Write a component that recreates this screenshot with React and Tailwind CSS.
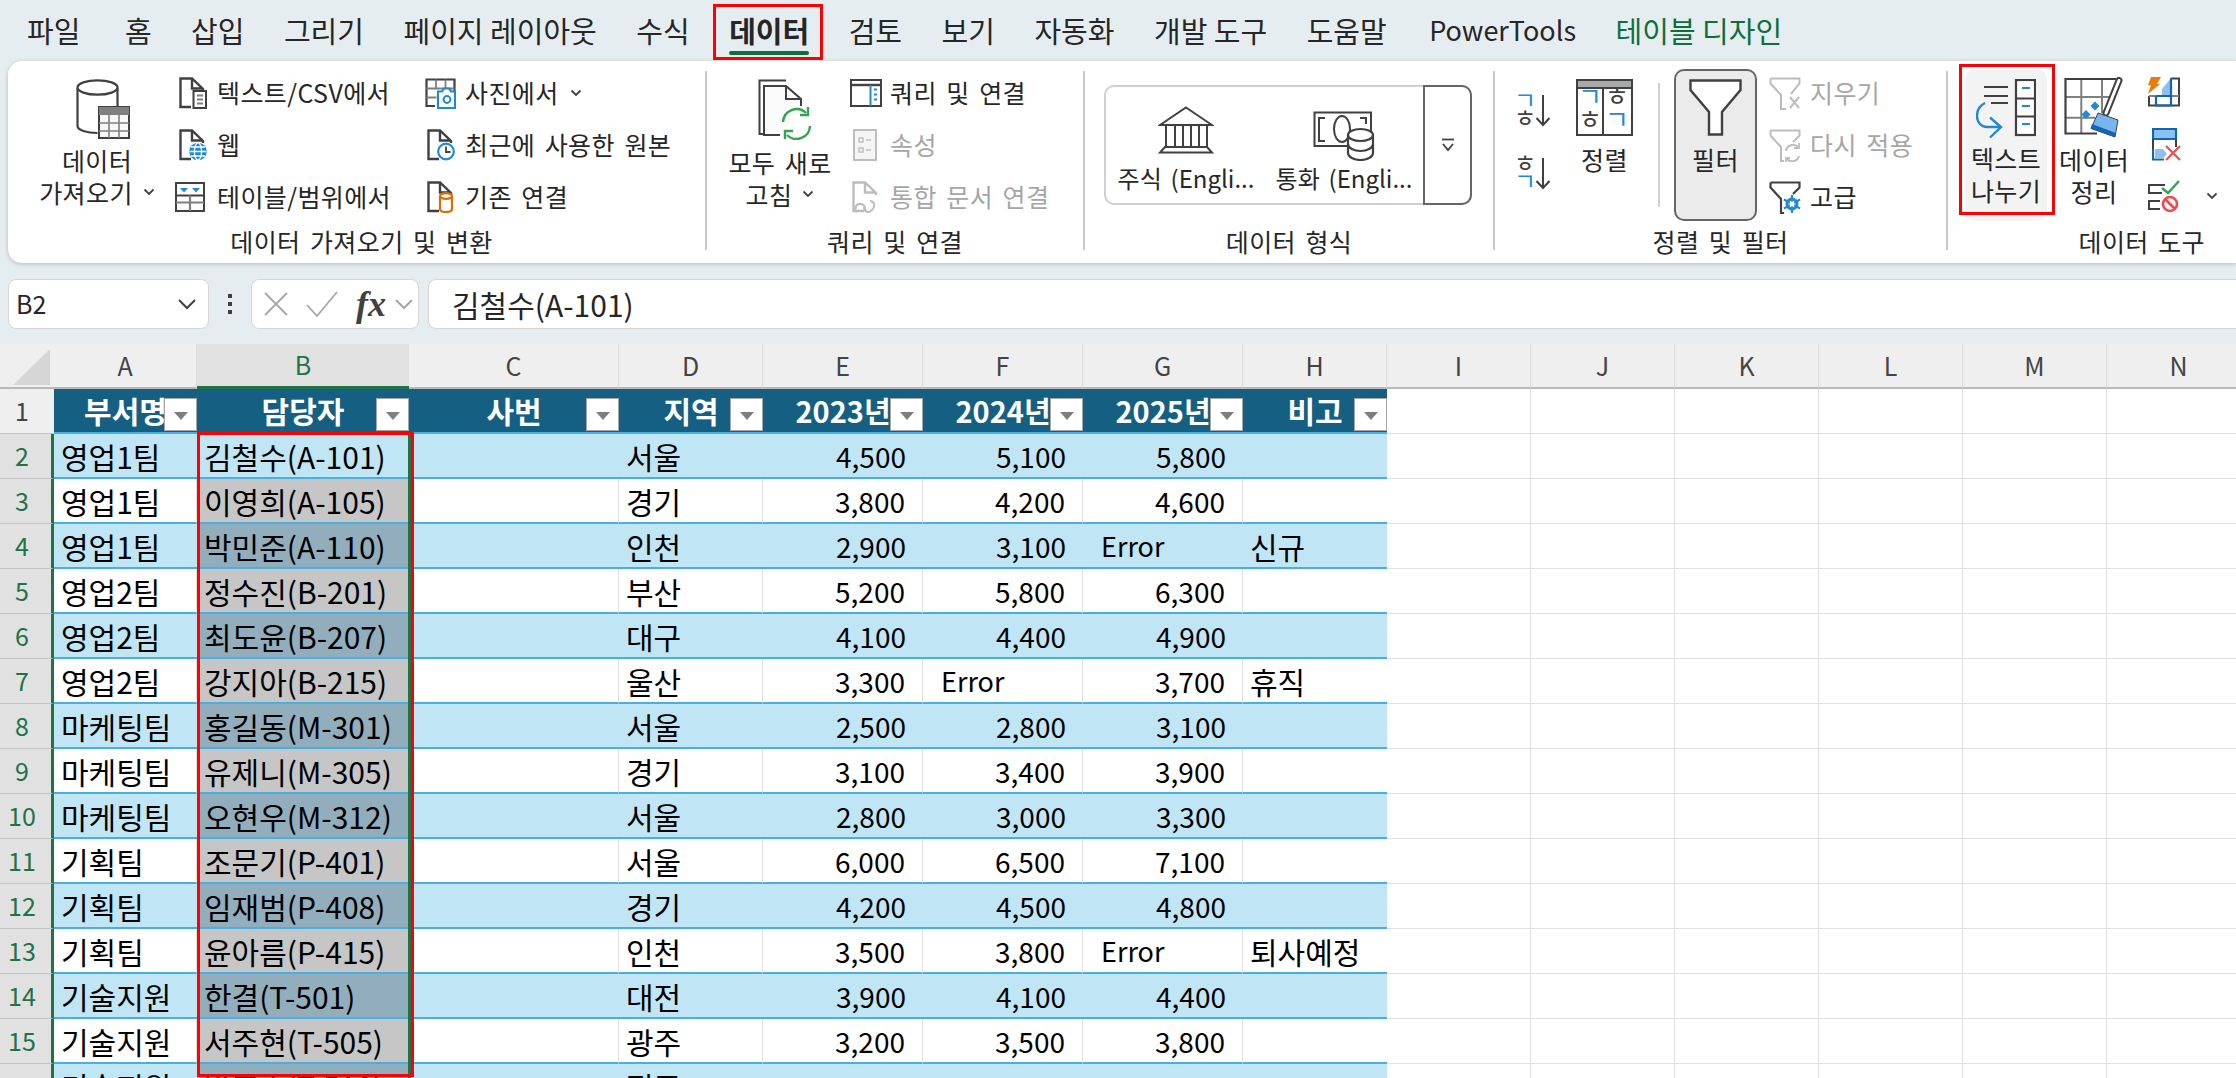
import React from 'react'

const DARK = '#404040'
const BLUE = '#1f8ad2'

const tabs = ['파일', '홈', '삽입', '그리기', '페이지 레이아웃', '수식', '데이터', '검토', '보기', '자동화', '개발 도구', '도움말', 'PowerTools', '테이블 디자인']

const rows = [
  ['영업1팀', '김철수(A-101)', '서울', '4,500', '5,100', '5,800', ''],
  ['영업1팀', '이영희(A-105)', '경기', '3,800', '4,200', '4,600', ''],
  ['영업1팀', '박민준(A-110)', '인천', '2,900', '3,100', 'Error', '신규'],
  ['영업2팀', '정수진(B-201)', '부산', '5,200', '5,800', '6,300', ''],
  ['영업2팀', '최도윤(B-207)', '대구', '4,100', '4,400', '4,900', ''],
  ['영업2팀', '강지아(B-215)', '울산', '3,300', 'Error', '3,700', '휴직'],
  ['마케팅팀', '홍길동(M-301)', '서울', '2,500', '2,800', '3,100', ''],
  ['마케팅팀', '유제니(M-305)', '경기', '3,100', '3,400', '3,900', ''],
  ['마케팅팀', '오현우(M-312)', '서울', '2,800', '3,000', '3,300', ''],
  ['기획팀', '조문기(P-401)', '서울', '6,000', '6,500', '7,100', ''],
  ['기획팀', '임재범(P-408)', '경기', '4,200', '4,500', '4,800', ''],
  ['기획팀', '윤아름(P-415)', '인천', '3,500', '3,800', 'Error', '퇴사예정'],
  ['기술지원', '한결(T-501)', '대전', '3,900', '4,100', '4,400', ''],
  ['기술지원', '서주현(T-505)', '광주', '3,200', '3,500', '3,800', ''],
  ['기술지원', '박준호(T-510)', '전주', '2,700', '3,000', '3,100', ''],
]

const GRID = 'grid grid-cols-[54px_143px_212px_210px_144px_160px_160px_160px_144px_144px_144px_144px_144px_144px_144px]'

function Chevron({ className = '', color = DARK }) {
  return (
    <svg width="12" height="8" viewBox="0 0 12 8" className={className}>
      <path d="M1.500 1.500 6 6l4.500-4.500" fill="none" stroke={color} strokeWidth="1.800" />
    </svg>
  )
}

function DocShape({ color = DARK }) {
  return <path d="M12 30H1.500V1.500H13L24 12V14M13 1.500V11.500H24" fill="none" stroke={color} strokeWidth="2.400" />
}

function DbTableIcon() {
  return (
    <svg width="54" height="60" viewBox="0 0 54 60">
      <path d="M1.500 9V47c0 4 9 7 20 7M41.500 9V27" fill="none" stroke={DARK} strokeWidth="2.200" />
      <ellipse cx="21.500" cy="8.500" rx="20" ry="7.200" fill="#fff" stroke={DARK} strokeWidth="2.200" />
      <rect x="23" y="28" width="30" height="31" fill="#f7f7f7" stroke={DARK} strokeWidth="2" />
      <rect x="23" y="28" width="30" height="8" fill="#808080" />
      <path d="M33 36V59M43 36V59M23 44H53M23 52H53" stroke="#808080" strokeWidth="1.600" />
    </svg>
  )
}

function TextDocIcon() {
  return (
    <svg width="28" height="32" viewBox="0 0 28 32">
      <DocShape />
      <rect x="14.500" y="14" width="12.500" height="17" fill="#fff" stroke={DARK} strokeWidth="2" />
      <path d="M18 18.500h6M18 22.500h6M18 26.500h6" stroke="#808080" strokeWidth="2" />
    </svg>
  )
}

function WebDocIcon() {
  return (
    <svg width="28" height="32" viewBox="0 0 28 32">
      <DocShape />
      <circle cx="19" cy="22.500" r="8.800" fill={BLUE} />
      <path d="M10.500 22.500h17M12 18h14M12 27h14" stroke="#fff" strokeWidth="1.300" />
      <ellipse cx="19" cy="22.500" rx="3.600" ry="8.600" fill="none" stroke="#fff" strokeWidth="1.300" />
    </svg>
  )
}

function TableRangeIcon() {
  return (
    <svg width="30" height="30" viewBox="0 0 30 30">
      <rect x="1" y="1" width="28" height="28" fill="#fff" stroke={DARK} strokeWidth="2" />
      <path d="M5 6h8l-4 4.500zM17 6h8l-4 4.500z" fill={BLUE} />
      <path d="M1 13.500h28" stroke={DARK} strokeWidth="2" />
      <path d="M1 20.500h28M15 13.500V29" stroke="#808080" strokeWidth="2.200" />
    </svg>
  )
}

function PhotoIcon() {
  return (
    <svg width="31" height="31" viewBox="0 0 31 31">
      <path d="M10 28H1.500V1.500h28V14" fill="none" stroke={DARK} strokeWidth="2.200" />
      <path d="M1.500 10.500h28M1.500 19.500h10M11 1.500v10M20.500 1.500v10" stroke="#808080" strokeWidth="1.800" />
      <path d="M13 13.500h4l2-3h5l2 3h4V30H13z" fill="#fff" stroke={BLUE} strokeWidth="2.200" />
      <circle cx="22" cy="21.500" r="3.400" fill="none" stroke={BLUE} strokeWidth="2" />
    </svg>
  )
}

function ClockDocIcon() {
  return (
    <svg width="28" height="32" viewBox="0 0 28 32">
      <DocShape />
      <circle cx="19" cy="22.500" r="7.800" fill="#fff" stroke={BLUE} strokeWidth="2.200" />
      <path d="M19 17.500v5.500h4.500" fill="none" stroke={DARK} strokeWidth="1.800" />
    </svg>
  )
}

function DbDocIcon() {
  return (
    <svg width="28" height="32" viewBox="0 0 28 32">
      <DocShape />
      <path d="M13 15v13c0 2 3 3 6 3s6-1 6-3V15" fill="#fff" stroke="#dd6b00" strokeWidth="2.200" />
      <ellipse cx="19" cy="15" rx="6" ry="2.800" fill="#fff" stroke="#dd6b00" strokeWidth="2.200" />
    </svg>
  )
}

function RefreshIcon() {
  return (
    <svg width="54" height="61" viewBox="0 0 54 61">
      <path d="M28 1.500H1.500V55H6" fill="none" stroke={DARK} strokeWidth="2" />
      <path d="M22 56H6V7H28L43 20V27M28 7V20H43" fill="#fafafa" stroke={DARK} strokeWidth="2" />
      <path d="M25 43a13.500 13.500 0 0 1 23-9" fill="none" stroke="#33a351" strokeWidth="2.400" />
      <path d="M50 28v8h-8" fill="none" stroke="#33a351" strokeWidth="2.400" />
      <path d="M52 47a13.500 13.500 0 0 1-23 9" fill="none" stroke="#33a351" strokeWidth="2.400" />
      <path d="M27 60v-8h8" fill="none" stroke="#33a351" strokeWidth="2.400" />
    </svg>
  )
}

function QueryPanelIcon() {
  return (
    <svg width="32" height="28" viewBox="0 0 32 28">
      <rect x="1" y="1" width="30" height="26" fill="#fff" stroke={DARK} strokeWidth="2" />
      <path d="M1 6h30" stroke={DARK} strokeWidth="2.400" />
      <path d="M20.500 6v21" stroke={BLUE} strokeWidth="2" />
      <path d="M24 10.500h3M24 15.500h3M24 20.500h3" stroke={BLUE} strokeWidth="2" />
    </svg>
  )
}

function PropertiesIcon() {
  return (
    <svg width="24" height="32" viewBox="0 0 24 32">
      <rect x="1" y="1" width="22" height="30" fill="#f5f5f5" stroke="#bdbdbd" strokeWidth="2" />
      <rect x="6" y="9" width="4" height="4" fill="none" stroke="#bdbdbd" strokeWidth="1.400" />
      <rect x="6" y="19" width="4" height="4" fill="none" stroke="#bdbdbd" strokeWidth="1.400" />
      <path d="M13 11h5M13 21h5" stroke="#bdbdbd" strokeWidth="1.600" />
    </svg>
  )
}

function LinkDocIcon() {
  return (
    <svg width="28" height="32" viewBox="0 0 28 32">
      <DocShape color="#bdbdbd" />
      <path d="M5 31c-3-3-1-9 4-8s5 7 2 7M18 20c4 0 6 5 2 9s-8 1-8-3" fill="none" stroke="#bdbdbd" strokeWidth="2" />
    </svg>
  )
}

function BankIcon() {
  return (
    <svg width="56" height="48" viewBox="0 0 56 48">
      <path d="M28 1.500 54 19H2z" fill="#fff" stroke={DARK} strokeWidth="2" />
      <path d="M8 19V41M17 19V41M25 19V41M33 19V41M41 19V41M49 19V41" stroke={DARK} strokeWidth="2" />
      <path d="M7 41H49L54 46.500H2z" fill="#fff" stroke={DARK} strokeWidth="2" />
    </svg>
  )
}

function MoneyIcon() {
  return (
    <svg width="62" height="50" viewBox="0 0 62 50">
      <path d="M36 35H1.500V1.500H58V22" fill="none" stroke={DARK} strokeWidth="2" />
      <path d="M12 7H6v23h6M47 7h6v6" fill="none" stroke={DARK} strokeWidth="2" />
      <ellipse cx="29" cy="18" rx="8" ry="13" fill="none" stroke={DARK} strokeWidth="2" />
      <path d="M35 24v18c0 4 6 7 12.500 7S60 46 60 42V24" fill="#fff" stroke={DARK} strokeWidth="2.200" />
      <ellipse cx="47.500" cy="24" rx="12.500" ry="6" fill="#fff" stroke={DARK} strokeWidth="2.200" />
      <path d="M35 33c0 4 6 7 12.500 7S60 37 60 33" fill="none" stroke={DARK} strokeWidth="2.200" />
    </svg>
  )
}

function SortUpIcon({ first, second, firstColor, secondColor }) {
  return (
    <svg width="33" height="33" viewBox="0 0 33 33" overflow="visible" fontFamily="'Noto Sans CJK KR', sans-serif" fontSize="24">
      <text x="-5" y="15" fill={firstColor}>{first}</text>
      <text x="-5" y="33" fill={secondColor}>{second}</text>
      <path d="M24 1v30M17.500 24l6.500 7 6.500-7" fill="none" stroke={DARK} strokeWidth="2" />
    </svg>
  )
}

function SortIcon() {
  return (
    <svg width="57" height="57" viewBox="0 0 57 57" overflow="visible" fontFamily="'Noto Sans CJK KR', sans-serif" fontSize="26">
      <rect x="1" y="1" width="55" height="55" fill="#fff" stroke={DARK} strokeWidth="2" />
      <rect x="1" y="1" width="55" height="8" fill="#a8a8a8" stroke={DARK} strokeWidth="2" />
      <path d="M27 9v47" stroke={DARK} strokeWidth="2" />
      <text x="2" y="27" fill={BLUE}>ㄱ</text>
      <text x="2" y="50" fill={DARK}>ㅎ</text>
      <text x="29" y="27" fill={DARK}>ㅎ</text>
      <text x="29" y="50" fill={BLUE}>ㄱ</text>
    </svg>
  )
}

function FunnelBig() {
  return (
    <svg width="53" height="57" viewBox="0 0 53 57">
      <path d="M1.500 1.500h50V11L33 33v22.500H20V33L1.500 11z" fill="#fff" stroke={DARK} strokeWidth="2.400" />
    </svg>
  )
}

function FunnelClear() {
  return (
    <svg width="33" height="33" viewBox="0 0 33 33">
      <path d="M1.500 1.500h29v5L22 17M1.500 1.500v5L12 18v14h5" fill="none" stroke="#bdbdbd" strokeWidth="2" />
      <path d="M21 20l9 11M30 20l-9 11" stroke="#bdbdbd" strokeWidth="2" />
    </svg>
  )
}

function FunnelReapply() {
  return (
    <svg width="33" height="33" viewBox="0 0 33 33">
      <path d="M1.500 1.500h29v5L24 13M1.500 1.500v5L12 18v14h3" fill="none" stroke="#bdbdbd" strokeWidth="2" />
      <path d="M17 22a7 7 0 0 1 12-4M30 27a7 7 0 0 1-12 3" fill="none" stroke="#bdbdbd" strokeWidth="2" />
      <path d="M30 14v5h-5M17 33v-4h4" fill="none" stroke="#bdbdbd" strokeWidth="1.800" />
    </svg>
  )
}

function FunnelAdvanced() {
  return (
    <svg width="33" height="33" viewBox="0 0 33 33">
      <path d="M1.500 1.500h29v5L24 13M1.500 1.500v5L12 18v14h3" fill="none" stroke={DARK} strokeWidth="2.200" />
      <circle cx="23" cy="23" r="5" fill="none" stroke={BLUE} strokeWidth="3" />
      <path d="M23 14v18M15 18.500l16 9M31 18.500l-16 9" stroke={BLUE} strokeWidth="2.200" />
      <circle cx="23" cy="23" r="2.500" fill="#fff" />
    </svg>
  )
}

function TextSplitIcon() {
  return (
    <svg width="60" height="60" viewBox="0 0 60 60">
      <path d="M8 8h24M8 17h24M15 24h17" stroke={DARK} strokeWidth="2.200" />
      <rect x="40" y="1" width="19" height="55" fill="#fff" stroke={DARK} strokeWidth="2.200" />
      <path d="M40 19.500h19M40 37.500h19" stroke={DARK} strokeWidth="2.200" />
      <path d="M46 9h8M46 27h8M46 45h8" stroke={BLUE} strokeWidth="2.200" />
      <path d="M9 24C3 27 1 32 1 37c0 6 4 11 10 11h14" fill="none" stroke={BLUE} strokeWidth="2.400" />
      <path d="M14 38.500 25 48 14 58.500" fill="none" stroke={BLUE} strokeWidth="2.400" />
    </svg>
  )
}

function DataCleanIcon() {
  return (
    <svg width="61" height="61" viewBox="0 0 61 61">
      <path d="M17.300 2v55M38 2v34M1 20h49M1 40.700h30" stroke="#7f7f7f" strokeWidth="2" />
      <path d="M52 2H1.500V56.500H33" fill="none" stroke={DARK} strokeWidth="2.200" />
      <path d="M55 3.500 42 36" stroke={DARK} strokeWidth="7" strokeLinecap="round" />
      <path d="M55 3.500 42 36" stroke="#fff" strokeWidth="3" strokeLinecap="round" />
      <path d="M34 36l20 7-3 17-24-8.500z" fill="#77b5ec" stroke={DARK} strokeWidth="1" />
      <path d="M27 51.500 51 60l.8-4L28 47z" fill="#1464b4" />
      <path d="M31 24.500l4.500 4.500-4.500 4.500-4.500-4.500zM22 33l4.500 4.500L22 42l-4.500-4.500z" fill={BLUE} />
    </svg>
  )
}

function FlashFillIcon() {
  return (
    <svg width="32" height="30" viewBox="0 0 32 30">
      <path d="M14 12 23 1V19H14z" fill="#8cc0f0" />
      <path d="M23 1.500H31V28.500H1V19" fill="none" stroke={DARK} strokeWidth="2" />
      <path d="M1 19H31" stroke="#7f7f7f" strokeWidth="2" />
      <path d="M8 19V28.500H23V1M8 19H23" fill="none" stroke="#1464b4" strokeWidth="2.200" />
      <path d="M3 0H13L9 7H12L0 17 3 8H0z" fill="#e87d0d" />
    </svg>
  )
}

function DuplicatesIcon() {
  return (
    <svg width="29" height="33" viewBox="0 0 29 33">
      <rect x="1" y="1" width="23" height="10" fill="#8cc0f0" />
      <path d="M1 11V1H24V11ZM1 21V31.500H12" fill="none" stroke="#1464b4" strokeWidth="2.200" />
      <path d="M1 11V21M24 11V19" stroke={DARK} strokeWidth="2" />
      <path d="M3 21H11L15 26 11 30.500H3z" fill="#8cc0f0" />
      <path d="M14 18l14 14M28 18 14 32" stroke="#f0504a" strokeWidth="2.200" />
    </svg>
  )
}

function ValidationIcon() {
  return (
    <svg width="32" height="33" viewBox="0 0 32 33">
      <path d="M17 5H1V13H14M12 21H1V29H12" fill="none" stroke={DARK} strokeWidth="2" />
      <path d="M14 8l6 5L31 1" fill="none" stroke="#33a351" strokeWidth="2.400" />
      <circle cx="22" cy="24" r="7" fill="#fff" stroke="#ef4b4b" strokeWidth="2.600" />
      <path d="M17 19l10 10" stroke="#ef4b4b" strokeWidth="2.600" />
    </svg>
  )
}

function SmallItem({ icon, label, chevron, disabled, slot = 'w-[42px]' }) {
  return (
    <div className="flex h-[52px] items-center">
      <div className={`${slot} flex shrink-0 items-center`}>{icon}</div>
      <span className={`whitespace-nowrap ${disabled ? 'text-[#a6a6a6]' : 'text-[#262626]'}`}>{label}</span>
      {chevron && <Chevron className="ml-[11px]" />}
    </div>
  )
}

function Group({ width, label, labelClass = 'text-center', children, last }) {
  return (
    <div className={`${width} ${last ? '' : 'border-r-2 border-[#c9c9c9]'} h-[179px] shrink-0`}>
      <div className="flex h-[156px]">{children}</div>
      <div className={`h-[28px] whitespace-nowrap leading-[28px] text-[#262626] ${labelClass}`}>{label}</div>
    </div>
  )
}

function Ribbon() {
  return (
    <div className="ml-[8px] flex h-[202px] rounded-l-[14px] bg-white pt-[10px] text-[25px] tracking-[0.4px] [word-spacing:3.5px] shadow-[0_1px_4px_rgba(0,0,0,0.22)]">
      <Group width="w-[699px]" label="데이터 가져오기 및 변환" labelClass="text-center pl-[10px]">
        <div className="ml-[14px] flex w-[150px] flex-col items-center pt-[8px] leading-[32px] text-[#262626]">
          <div className="ml-[11px] h-[60px]"><DbTableIcon /></div>
          <div className="mt-[5px]">데이터</div>
          <div className="flex items-center">가져오기<Chevron className="ml-[10px]" /></div>
        </div>
        <div className="-mt-[4px] ml-[3px] w-[248px]">
          <SmallItem icon={<TextDocIcon />} label="텍스트/CSV에서" slot="w-[42px] pl-[4px]" />
          <SmallItem icon={<WebDocIcon />} label="웹" slot="w-[42px] pl-[4px]" />
          <SmallItem icon={<TableRangeIcon />} label="테이블/범위에서" />
        </div>
        <div className="-mt-[4px]">
          <SmallItem icon={<PhotoIcon />} label="사진에서" chevron slot="w-[42px] pl-[2px]" />
          <SmallItem icon={<ClockDocIcon />} label="최근에 사용한 원본" slot="w-[42px] pl-[4px]" />
          <SmallItem icon={<DbDocIcon />} label="기존 연결" slot="w-[42px] pl-[4px]" />
        </div>
      </Group>

      <Group width="w-[378px]" label="쿼리 및 연결">
        <div className="ml-[13px] flex w-[120px] flex-col items-center pt-[8px] leading-[32px] text-[#262626]">
          <div className="ml-[10px] h-[61px]"><RefreshIcon /></div>
          <div className="mt-[6px] whitespace-nowrap">모두 새로</div>
          <div className="flex items-center">고침<Chevron className="ml-[10px]" /></div>
        </div>
        <div className="-mt-[4px] ml-[8px]">
          <SmallItem icon={<QueryPanelIcon />} label="쿼리 및 연결" slot="w-[42px] pl-[2px]" />
          <SmallItem icon={<PropertiesIcon />} label="속성" disabled slot="w-[42px] pl-[5px]" />
          <SmallItem icon={<LinkDocIcon />} label="통합 문서 연결" disabled slot="w-[42px] pl-[4px]" />
        </div>
      </Group>

      <Group width="w-[410px]" label="데이터 형식">
        <div className="ml-[19px] mt-[14px] flex h-[120px] w-[368px] rounded-[10px] border-2 border-[#cfcfcf] pl-px text-[24px] tracking-normal text-[#262626]">
          <div className="flex w-[158px] flex-col items-center pt-[19px]">
            <div className="h-[48px]"><BankIcon /></div>
            <div className="mt-[8px] whitespace-nowrap leading-[32px]">주식 (Engli...</div>
          </div>
          <div className="flex w-[158px] flex-col items-center pt-[24px]">
            <div className="h-[50px]"><MoneyIcon /></div>
            <div className="mt-[1px] whitespace-nowrap leading-[32px]">통화 (Engli...</div>
          </div>
          <div className="-my-[2px] -mr-[2px] flex flex-1 items-center justify-center rounded-r-[10px] border-2 border-[#666]">
            <svg width="14" height="14" viewBox="0 0 14 14">
              <path d="M1 1.500h12" stroke={DARK} strokeWidth="1.800" />
              <path d="M2 6l5 6 5-6" fill="none" stroke={DARK} strokeWidth="1.800" />
            </svg>
          </div>
        </div>
      </Group>

      <Group width="w-[453px]" label="정렬 및 필터">
        <div className="ml-[24px] flex w-[57px] flex-col pt-[23px]">
          <SortUpIcon first="ㄱ" second="ㅎ" firstColor={BLUE} secondColor={DARK} />
          <div className="mt-[30px]"><SortUpIcon first="ㅎ" second="ㄱ" firstColor={DARK} secondColor={BLUE} /></div>
        </div>
        <div className="flex w-[57px] flex-col items-center pt-[8px] text-[#262626]">
          <div className="h-[57px]"><SortIcon /></div>
          <div className="mt-[7px] leading-[32px]">정렬</div>
        </div>
        <div className="ml-[25px] mt-[12px] h-[124px] w-[2px] bg-[#d0d0d0]" />
        <div className="-mt-[2px] ml-[14px] flex h-[152px] w-[83px] flex-col items-center rounded-[10px] border-2 border-[#666] bg-[#ebebeb] pt-[8px] text-[#262626]">
          <div className="h-[57px]"><FunnelBig /></div>
          <div className="mt-[7px] leading-[32px]">필터</div>
        </div>
        <div className="-mt-[4px] ml-[12px]">
          <SmallItem icon={<FunnelClear />} label="지우기" disabled slot="w-[41px]" />
          <SmallItem icon={<FunnelReapply />} label="다시 적용" disabled slot="w-[41px]" />
          <SmallItem icon={<FunnelAdvanced />} label="고급" slot="w-[41px]" />
        </div>
      </Group>

      <Group width="flex-1" label="데이터 도구" labelClass="text-right pr-[31px]" last>
        <div className="relative -mt-[2px] ml-[17px] flex h-[152px] w-[82px] flex-col items-center rounded-[10px] bg-[#f3f3f3] pt-[10px] leading-[32px] text-[#262626]">
          <div className="h-[60px]"><TextSplitIcon /></div>
          <div className="mt-[3px] whitespace-nowrap">텍스트</div>
          <div className="whitespace-nowrap">나누기</div>
          <div className="absolute -left-[6px] -right-[8px] -top-[5px] bottom-[6px] border-[3px] border-[#f00]" />
        </div>
        <div className="ml-[7px] flex w-[80px] flex-col items-center pt-[6px] leading-[32px] text-[#262626]">
          <div className="h-[61px]"><DataCleanIcon /></div>
          <div className="mt-[5px] whitespace-nowrap">데이터</div>
          <div className="whitespace-nowrap">정리</div>
        </div>
        <div className="-mt-[5px] ml-[14px]">
          <div className="flex h-[52px] items-center"><FlashFillIcon /></div>
          <div className="flex h-[52px] items-center pl-[4px]"><DuplicatesIcon /></div>
          <div className="flex h-[52px] items-center"><ValidationIcon /><Chevron className="ml-[26px]" /></div>
        </div>
      </Group>
    </div>
  )
}

function FormulaBar() {
  return (
    <div className="mt-[16px] flex h-[50px] text-[#262626]">
      <div className="ml-[8px] flex w-[201px] items-center justify-between rounded-[8px] border border-[#d6d6d6] bg-white pl-[7px] pr-[11px] text-[25px]">
        B2
        <svg width="20" height="12" viewBox="0 0 20 12"><path d="M2 2l8 8 8-8" fill="none" stroke={DARK} strokeWidth="2" /></svg>
      </div>
      <div className="ml-[19px] flex w-[4px] flex-col items-center justify-center gap-[4px]">
        <div className="size-[4px] bg-[#404040]" />
        <div className="size-[4px] bg-[#404040]" />
        <div className="size-[4px] bg-[#404040]" />
      </div>
      <div className="ml-[19px] flex w-[168px] items-center rounded-[8px] border border-[#d6d6d6] bg-white pl-[11px]">
        <svg width="26" height="26" viewBox="0 0 26 26"><path d="M2 2l22 22M24 2 2 24" stroke="#a6a6a6" strokeWidth="1.800" /></svg>
        <svg width="32" height="26" viewBox="0 0 32 26" className="ml-[17px]"><path d="M1 14l10 11L31 1" fill="none" stroke="#a6a6a6" strokeWidth="1.800" /></svg>
        <span className="ml-[18px] w-[28px] font-['Liberation_Serif',serif] text-[36px] font-bold italic leading-none text-[#404040]">fx</span>
        <svg width="20" height="12" viewBox="0 0 20 12" className="ml-[10px]"><path d="M2 2l8 8 8-8" fill="none" stroke="#a6a6a6" strokeWidth="2" /></svg>
      </div>
      <div className="ml-[9px] flex flex-1 items-center rounded-l-[8px] border border-r-0 border-[#d6d6d6] bg-white pl-[23px] text-[30px]">
        김철수(A-101)
      </div>
    </div>
  )
}

function FilterButton() {
  return (
    <div className="absolute bottom-px right-0 flex size-[33px] items-center justify-center border border-[#a6a6a6] bg-white pt-[2px]">
      <svg width="14" height="8" viewBox="0 0 14 8"><path d="M0 0h14L7 8z" fill="#7f7f7f" /></svg>
    </div>
  )
}

function ColumnHeaders() {
  const cols = ['A', 'B', 'C', 'D', 'E', 'F', 'G', 'H', 'I', 'J', 'K', 'L', 'M', 'N']
  return (
    <div className={`${GRID} h-[45px] text-[25px]`}>
      <div className="flex items-start border-b-2 border-[#b8b8b8] bg-[#efefef]">
        <svg width="54" height="43" viewBox="0 0 54 43"><path d="M13 41h37V5z" fill="#d6d6d6" /></svg>
      </div>
      {cols.map((c) => (
        c === 'B' ? (
          <div key={c} className="flex items-center justify-center border-b-[3px] border-[#217346] bg-[#e1e1e1] text-[#217346]">{c}</div>
        ) : (
          <div key={c} className="flex items-center justify-center border-b-2 border-r border-[#b8b8b8] border-r-[#dcdcdc] bg-[#efefef] text-[#444]">{c}</div>
        )
      ))}
    </div>
  )
}

function HeaderRow() {
  const heads = ['부서명', '담당자', '사번', '지역', '2023년', '2024년', '2025년', '비고']
  return (
    <div className={`${GRID} h-[45px]`}>
      <div className="flex items-center justify-center border-b border-[#c4c4c4] bg-[#efefef] pr-[10px] text-[25px] text-[#444]">1</div>
      {heads.map((h) => (
        <div key={h} className={`relative flex items-center justify-center overflow-hidden border-b-2 border-[#45b0e1] bg-[#156082] font-bold text-white ${h.startsWith('20') ? 'text-[29px]' : 'text-[30px]'}`}>
          <span className="whitespace-nowrap">{h}</span>
          <FilterButton />
        </div>
      ))}
      {[0, 1, 2, 3, 4, 5].map((i) => <EmptyCell key={i} />)}
    </div>
  )
}

function EmptyCell() {
  return <div className="border-b border-r border-[#e1e1e1] bg-white" />
}

function TableCell({ children, align, banded, selected, last }) {
  let bg = banded ? 'bg-[#c0e6f5]' : 'bg-white'
  if (selected) bg = banded ? 'bg-[#92aebc]' : 'bg-[#c6c6c6]'
  const grid = !banded && !selected && !last ? 'border-r border-r-[#e1e1e1]' : ''
  let pad = 'pl-[7px] text-[30px]'
  if (align === 'right') pad = 'justify-end pr-[17px] text-[28px]'
  if (align === 'error') pad = 'pl-[18px] text-[27px]'
  return (
    <div className={`flex items-center whitespace-nowrap border-b-2 border-b-[#45b0e1] leading-none text-black ${bg} ${grid} ${pad}`}>
      {children}
    </div>
  )
}

function DataRow({ row, index }) {
  const banded = index % 2 === 0
  const [dept, person, region, y23, y24, y25, note] = row
  const num = (v) => (v === 'Error' ? 'error' : 'right')
  return (
    <div className={`${GRID} h-[45px]`}>
      <div className="flex items-center justify-center border-b border-r-[3px] border-b-[#c4c4c4] border-r-[#217346] bg-[#e1e1e1] pr-[7px] text-[25px] text-[#217346]">{index + 2}</div>
      <TableCell banded={banded}>{dept}</TableCell>
      <TableCell banded={banded} selected={index > 0}>{person}</TableCell>
      <TableCell banded={banded} />
      <TableCell banded={banded}>{region}</TableCell>
      <TableCell banded={banded} align={num(y23)}>{y23}</TableCell>
      <TableCell banded={banded} align={num(y24)}>{y24}</TableCell>
      <TableCell banded={banded} align={num(y25)}>{y25}</TableCell>
      <TableCell banded={banded} last>{note}</TableCell>
      {[0, 1, 2, 3, 4, 5].map((i) => <EmptyCell key={i} />)}
    </div>
  )
}

export default function App() {
  return (
    <div className="relative h-[1078px] w-[2236px] overflow-hidden bg-[#e6edf1] font-['Noto_Sans_CJK_KR','Liberation_Sans',sans-serif]">
      <div className="flex h-[61px] items-center gap-[39.5px] pl-[27px] text-[29px] text-[#262626]">
        {tabs.map((t) => {
          if (t === '데이터') {
            return (
              <div key={t} className="relative font-bold">
                {t}
                <div className="absolute -bottom-[3px] left-0 h-[4px] w-full rounded-full bg-[#0e6f3c]" />
                <div className="absolute -bottom-[8px] -left-[16px] -right-[14px] -top-[5px] border-[3px] border-[#f00]" />
              </div>
            )
          }
          if (t === '홈') return <div key={t} className="ml-[5px] whitespace-nowrap">{t}</div>
          if (t === 'PowerTools') return <div key={t} className="ml-[3px] whitespace-nowrap text-[27px]">{t}</div>
          return <div key={t} className={`whitespace-nowrap ${t === '테이블 디자인' ? 'text-[#0e6f3c]' : ''}`}>{t}</div>
        })}
      </div>
      <Ribbon />
      <FormulaBar />
      <div className="relative mt-[15px]">
        <ColumnHeaders />
        <HeaderRow />
        {rows.map((r, i) => <DataRow key={i} row={r} index={i} />)}
        {/* selection edge and the red box around column B */}
        <div className="absolute left-[408px] top-[89px] h-[660px] w-[3px] bg-[#217346]" />
        <div className="absolute left-[197px] top-[88px] h-[645px] w-[217px] border-[3px] border-[#f00]" />
      </div>
    </div>
  )
}
